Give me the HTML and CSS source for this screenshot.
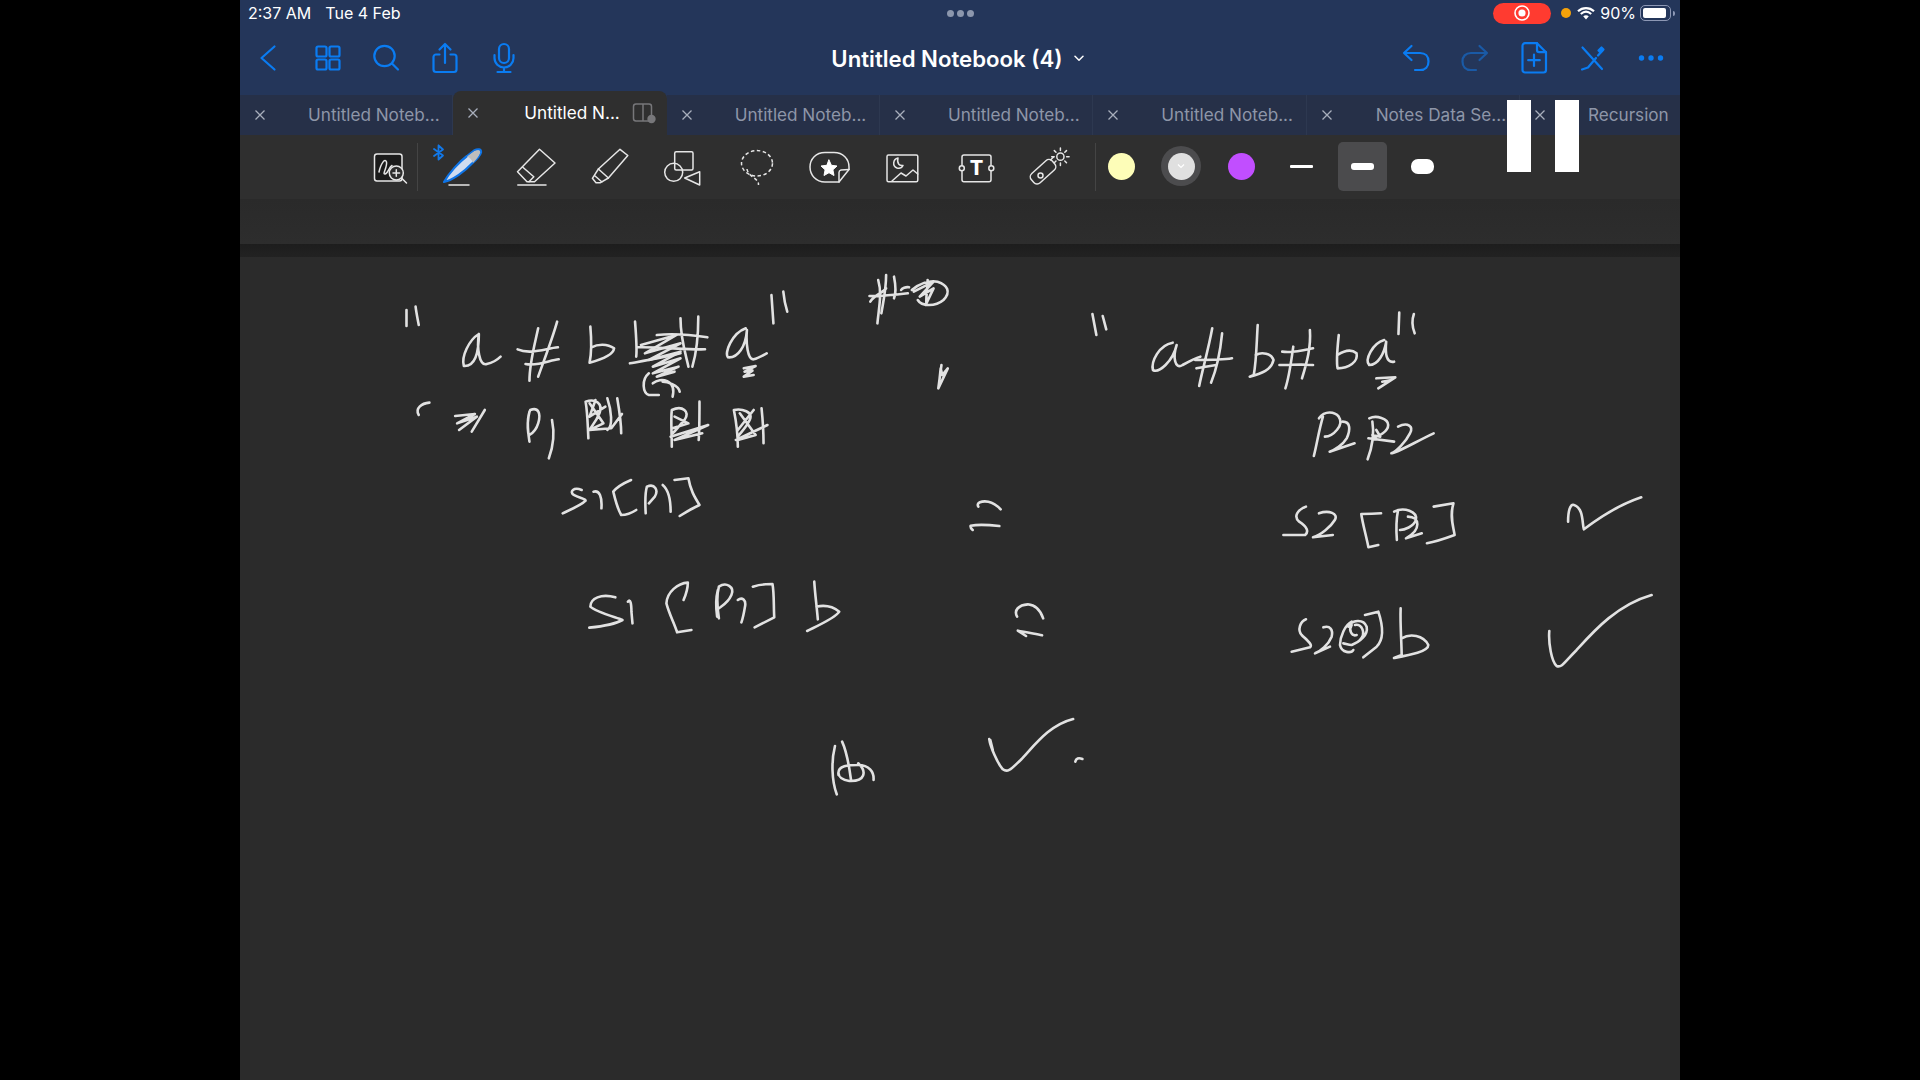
FILE: index.html
```html
<!DOCTYPE html>
<html lang="en">
<head>
<meta charset="utf-8">
<title>Untitled Notebook (4)</title>
<link rel="stylesheet" href="styles.css">
</head>
<body>
<div class="app">
  <header class="top">
    <div class="status">
      <div class="status-left"><span>2:37 AM</span><span>Tue 4 Feb</span></div>
      <div class="status-dots"><i></i><i></i><i></i></div>
      <div class="status-right">
        <div class="rec"><svg width="18" height="18" viewBox="0 0 18 18"><circle class="rec-ring" cx="9" cy="9" r="7"/><circle class="rec-core" cx="9" cy="9" r="3.6"/></svg></div>
        <i class="cam-dot"></i>
        <svg class="wifi" width="18" height="14" viewBox="0 0 18 14"><path class="wifi-arc" d="M1 5.2C5.6 1 12.4 1 17 5.2"/><path class="wifi-arc" d="M3.8 8C7 5.2 11 5.2 14.2 8"/><path class="wifi-fill" d="M6.2 10.2C7.9 8.8 10.1 8.8 11.8 10.2L9 13.4Z"/></svg>
        <span class="batt-text">90%</span>
        <div class="batt"><div class="batt-in"></div></div>
        <i class="batt-nub"></i>
      </div>
    </div>
    <nav class="nav">
      <div class="nav-side">
        <div class="slot"><svg class="ico" viewBox="0 0 32 32"><path d="M21.500 4.500L8.500 16l13 11.500"/></svg></div>
        <div class="slot"><svg class="ico" viewBox="0 0 32 32"><rect x="4.500" y="4.500" width="10" height="10" rx="1.500"/><rect x="17.500" y="4.500" width="10" height="10" rx="1.500"/><rect x="4.500" y="17.500" width="10" height="10" rx="1.500"/><rect x="17.500" y="17.500" width="10" height="10" rx="1.500"/></svg></div>
        <div class="slot"><svg class="ico" viewBox="0 0 32 32"><circle cx="14.500" cy="14" r="10.200"/><path d="M22 21.500L28 27.500"/></svg></div>
        <div class="slot"><svg class="ico" viewBox="0 0 32 32"><path d="M10.500 12.500H7a2.500 2.500 0 0 0-2.500 2.500v12.500A2.500 2.500 0 0 0 7 30h18a2.500 2.500 0 0 0 2.500-2.500V15a2.500 2.500 0 0 0-2.500-2.500h-3.500"/><path d="M16 21V2.500M10.500 7.500L16 2l5.500 5.500"/></svg></div>
        <div class="slot"><svg class="ico" viewBox="0 0 32 32"><rect x="11" y="2" width="10" height="19" rx="5"/><path d="M6.500 13v3a9.500 9.500 0 0 0 19 0v-3M16 25.500V30M9.500 30h13"/></svg></div>
      </div>
      <div class="title"><span>Untitled Notebook (4)</span><svg class="title-chev" width="10" height="7" viewBox="0 0 10 7"><path d="M1 1.200L5 5.200L9 1.200"/></svg></div>
      <div class="nav-side nav-right">
        <div class="slot"><svg class="ico" viewBox="0 0 32 32"><path d="M11.500 4L4 11l7.500 7M4 11h16c5.500 0 8.500 3.500 8.500 8.500S25.500 28 20 28h-5"/></svg></div>
        <div class="slot"><svg class="ico ico-dim" viewBox="0 0 32 32"><path d="M20.500 4L28 11l-7.500 7M28 11H12C6.500 11 3.500 14.500 3.500 19.500S6.500 28 12 28h5"/></svg></div>
        <div class="slot"><svg class="ico" viewBox="0 0 32 32"><path d="M7 1.200h12L28 10.200V28a2.500 2.500 0 0 1-2.500 2.500H7A2.500 2.500 0 0 1 4.500 28V3.700A2.500 2.500 0 0 1 7 1.200Z"/><path d="M19 1.200V8a2.200 2.200 0 0 0 2.200 2.200H28M16 12.500v11.500M10.200 18.200h11.600"/></svg></div>
        <div class="slot"><svg class="ico" viewBox="0 0 32 32"><path d="M6.500 5.500L26 27M6 27.500L12 25.500L20 16M22 13.500L26.500 8.500"/><path class="ico-fill" d="M22.500 8.500L25.500 5.500L27.500 7.500L24.500 10.500Z"/></svg></div>
        <div class="slot"><svg class="ico-dots" viewBox="0 0 32 32"><circle cx="6.500" cy="16" r="2.700"/><circle cx="16" cy="16" r="2.700"/><circle cx="25.500" cy="16" r="2.700"/></svg></div>
      </div>
    </nav>
    <div class="tabs">
      <div class="tab"><svg class="tab-x" viewBox="0 0 12 12"><path d="M1.500 1.500l9 9M10.500 1.500l-9 9"/></svg><span class="tab-name">Untitled Noteb...</span></div>
      <div class="tab tab-active"><svg class="tab-x" viewBox="0 0 12 12"><path d="M1.500 1.500l9 9M10.500 1.500l-9 9"/></svg><span class="tab-name">Untitled N...</span>
        <svg class="tab-split" width="24" height="24" viewBox="0 0 24 24"><rect x="1.500" y="3" width="18" height="17" rx="2.500"/><path d="M11 3v17"/><circle class="tab-split-dot" cx="19.500" cy="18" r="4.200"/></svg></div>
      <div class="tab"><svg class="tab-x" viewBox="0 0 12 12"><path d="M1.500 1.500l9 9M10.500 1.500l-9 9"/></svg><span class="tab-name">Untitled Noteb...</span></div>
      <div class="tab"><svg class="tab-x" viewBox="0 0 12 12"><path d="M1.500 1.500l9 9M10.500 1.500l-9 9"/></svg><span class="tab-name">Untitled Noteb...</span></div>
      <div class="tab"><svg class="tab-x" viewBox="0 0 12 12"><path d="M1.500 1.500l9 9M10.500 1.500l-9 9"/></svg><span class="tab-name">Untitled Noteb...</span></div>
      <div class="tab"><svg class="tab-x" viewBox="0 0 12 12"><path d="M1.500 1.500l9 9M10.500 1.500l-9 9"/></svg><span class="tab-name tab-name-notes">Notes Data Se...</span></div>
      <div class="tab"><svg class="tab-x" viewBox="0 0 12 12"><path d="M1.500 1.500l9 9M10.500 1.500l-9 9"/></svg><span class="tab-name">Recursion</span></div>
    </div>
  </header>

  <section class="toolbar">
    <div class="tool"><svg class="tic" viewBox="0 0 44 44"><rect class="tic-dark" x="6.500" y="9" width="27.500" height="27" rx="2.500"/><path d="M11 27C13 18 17 13 18.500 17C19.500 22 14 29.500 17 29C20 28.500 21 22 24 20.500"/><circle class="tic-bg" cx="28.300" cy="28" r="7"/><path d="M33.500 33L38.500 38M25 28h6.600M28.300 24.700v6.600"/></svg></div>
    <i class="tdiv tdiv-first"></i>
    <div class="tool"><svg class="tic tic-pen" viewBox="0 0 44 44"><path class="pen-body" d="M3 37C8 28 18 17 26 11L33 5.500C37 3.500 40.500 4 40 7.500C39 11 35 15 31 18.500C24 26 12 35 3 37Z"/><path class="pen-band" d="M26 11.500L33.500 6C37 4.500 40 5 39 8C38 11 35 15 32 18C31 15 29 12.500 26 11.500Z"/><path d="M8 40H28"/><path class="bt" d="M-2.500 0.500V14.500L2 10.500L-7 4M-7 11L2 4.500L-2.500 0.500"/></svg></div>
    <div class="tool"><svg class="tic" viewBox="0 0 44 44"><path d="M25.500 4.300L41 18L20.500 36.700H13L3.500 26.700Z"/><path d="M8.800 22.300L19.800 31.700L15 36.700M3.800 40H32"/></svg></div>
    <div class="tool"><svg class="tic" viewBox="0 0 44 44"><path d="M32 4.300L39.800 10.500L20.400 33L10.400 24Z"/><path d="M10.400 24L4.400 33.300L8 37.700H12.500L20.400 33M6.500 30.500L14 37"/></svg></div>
    <div class="tool"><svg class="tic" viewBox="0 0 44 44"><rect x="13.700" y="6.700" width="18.300" height="18.300" rx="1.500"/><circle cx="12.700" cy="27.300" r="9"/><path d="M38.700 26.700L23.700 33L38.700 40Z"/></svg></div>
    <div class="tool"><svg class="tic tic-dash" viewBox="0 0 44 44"><ellipse cx="22" cy="18.300" rx="15.500" ry="12.700"/><path d="M12 24C13 32 24 33 23.500 40"/></svg></div>
    <div class="tool"><svg class="tic" viewBox="0 0 44 44"><path d="M17 7.500H26C35 7.500 41 14 41 22V24.500L31 37H17C8 37 2 30 2 22C2 14 8 7.500 17 7.500Z"/><path d="M41 24.500L33 25Q31 25.500 31 27.500V37"/><path class="tic-solid" d="M21 15L23.400 20.300L29 21L24.900 24.800L26 30.500L21 27.700L16 30.500L17.100 24.800L13 21L18.600 20.300Z"/></svg></div>
    <div class="tool"><svg class="tic" viewBox="0 0 44 44"><rect x="6" y="10" width="30.800" height="26.700" rx="1.500"/><path d="M17 13C12 14 11 21 16 23C19 24 21 22.500 22 20.500C19 21 15.500 19 17 13ZM11 36L20 28L25 31L32 25L36.800 29"/></svg></div>
    <div class="tool"><svg class="tic" viewBox="0 0 44 44"><rect x="7" y="10" width="29" height="26.700" rx="2"/><circle class="tic-bg" cx="6.800" cy="23.300" r="2.500"/><circle class="tic-bg" cx="36.300" cy="23.300" r="2.500"/><text class="tic-t" x="21.500" y="30">T</text></svg></div>
    <div class="tool"><svg class="tic" viewBox="0 0 44 44"><rect x="1" y="20.500" width="28" height="12.500" rx="4.500" transform="rotate(-42 15 26.700)"/><circle cx="12.500" cy="30.500" r="2.500"/><path d="M22.500 15L25.500 12"/><circle cx="32.400" cy="11.700" r="3.600"/><path d="M32.400 3V5.500M32.400 18V20.500M23.700 11.700H26.200M38.600 11.700H41.100M26.300 5.600L28 7.300M36.800 16L38.500 17.700M26.300 17.700L28 16M36.800 7.300L38.500 5.600"/></svg></div>
    <i class="tdiv tdiv-second"></i>
    <div class="prop"><i class="swatch swatch-yellow"></i></div>
    <div class="prop"><div class="swatch-ring"><i class="swatch swatch-grey"><svg width="8" height="6" viewBox="0 0 8 6"><path d="M1 1.500L4 4.500L7 1.500"/></svg></i></div></div>
    <div class="prop"><i class="swatch swatch-purple"></i></div>
    <div class="prop"><i class="line line-s"></i></div>
    <div class="prop"><div class="line-box"><i class="line line-m"></i></div></div>
    <div class="prop"><i class="line line-l"></i></div>
  </section>

  <div class="band"></div>
  <div class="page-edge"></div>

  <main class="canvas">
    <svg class="ink" viewBox="240 257 1440 823">
      <g transform="translate(380 260) scale(.3954 .3333)">
        <path d="M67 150L67 198M90 140C92 160 95 175 98 195"/>
        <path d="M250 222C225 240 205 290 212 318C240 320 250 280 250 222C245 260 250 320 270 312C285 308 298 298 305 290"/>
        <path d="M348 268C380 285 420 265 450 262M368 312C400 320 430 300 452 298M400 205C390 260 378 310 378 362M448 185C435 240 415 300 400 350"/>
        <path d="M532 200C535 240 535 280 530 308C555 300 590 285 592 265C575 250 550 252 535 262"/>
        <path d="M645 185C648 230 650 270 648 290M632 310C680 300 730 290 760 280M760 175C760 240 775 290 780 320M805 170C805 220 800 280 790 320M700 225C740 220 790 225 828 232M650 262C700 260 780 270 822 268"/>
        <path d="M660 255L750 225L670 280L760 250L680 300L760 275L690 320L760 295L690 340L755 320L700 350L745 335"/>
        <path d="M680 340C660 360 665 400 680 405L705 405M690 370C710 350 750 360 740 410M715 365C725 365 755 375 758 395"/>
        <path d="M925 205C890 220 870 280 880 292C905 295 925 260 928 210C925 250 930 300 945 298C955 295 970 285 978 280"/>
        <path d="M920 325L950 318L922 335L942 332L920 350L945 345"/>
        <path d="M990 105L995 190M1020 95C1022 120 1026 140 1030 155"/>
        <path d="M1260 60C1270 100 1262 140 1258 190M1280 45C1280 90 1272 130 1268 160M1238 108C1260 110 1300 105 1335 100M1240 125C1250 105 1270 100 1280 85M1300 50C1305 80 1305 100 1300 115M1318 90C1320 85 1330 80 1338 82"/>
        <path d="M1345 90C1365 70 1390 60 1410 65C1435 75 1445 95 1425 120C1405 140 1370 140 1360 120M1350 95L1400 65L1365 110L1400 85L1380 135M1385 60C1385 90 1380 110 1382 135"/>
        <path d="M1420 315L1412 385L1436 325L1422 345L1418 325L1414 370"/>
        <path d="M125 428C105 430 88 445 98 465"/>
        <path d="M190 468L240 462L195 490L245 470L200 510M265 450L232 515"/>
        <path d="M378 545C372 500 372 470 380 450C400 440 408 460 400 490C395 510 385 520 378 525M375 520C372 495 374 475 378 455M435 480C442 520 438 560 427 595"/>
        <path d="M527 535C525 490 525 460 520 425C545 415 565 430 555 460C545 490 530 505 530 510M575 510C590 500 585 450 575 415M610 520C610 490 605 450 600 415M530 430L565 490L530 510L585 505L612 462M545 420L530 470L570 440"/>
        <path d="M738 560C738 520 735 480 738 450C765 435 785 455 770 480C755 500 745 515 740 520M808 425C808 470 808 510 806 540M735 530L830 495L745 540L815 520M745 470L780 490L740 505"/>
        <path d="M905 560C905 510 900 480 895 450C915 445 945 455 935 480C925 505 910 520 905 530M970 550C970 510 968 480 965 445M900 540L980 495M910 460L950 525L905 540M945 450L905 510"/>
        <path d="M510 690C490 680 478 695 490 705C505 715 520 715 520 722C510 735 480 750 462 760M540 695C555 690 562 710 560 745"/>
        <path d="M635 660C615 670 600 680 590 695C595 720 600 745 610 765C625 765 635 760 648 750M672 760C670 720 670 700 675 680C695 670 705 690 695 710L680 730M715 675C730 690 735 720 735 755M745 660L780 655C785 690 795 710 808 735C790 745 775 755 758 768"/>
      </g>
      <g transform="translate(950 480) scale(.3333)">
        <path d="M85 80C78 68 95 62 115 65C130 68 140 75 152 88M148 138C120 135 85 133 62 137C60 143 66 148 68 150"/>
      </g>
      <g transform="translate(1060 290) scale(.3954 .3333)">
        <path d="M82 72L92 135M108 78L117 118"/>
        <path d="M285 158C250 165 230 215 235 240C250 250 285 215 295 165C285 200 290 240 310 225C325 215 340 205 355 200"/>
        <path d="M385 115C375 180 360 240 352 288M410 130C405 190 395 240 382 278M342 210C370 210 410 210 435 205M345 235L395 225"/>
        <path d="M500 105C497 160 497 210 490 255L480 260C510 250 535 240 540 210C535 190 510 185 495 195"/>
        <path d="M590 170C585 210 580 260 570 295M632 120C635 170 625 215 612 265M562 185C590 190 620 180 640 175M555 225C585 225 610 222 640 225"/>
        <path d="M705 135C702 170 698 210 702 235C730 235 755 215 750 190C735 175 715 185 702 195"/>
        <path d="M820 150C790 160 770 210 782 225C805 225 820 190 825 155C822 190 825 220 845 215"/>
        <path d="M800 265L848 262L805 295L838 270L815 275"/>
        <path d="M858 68L856 132M895 72C888 95 892 115 897 130"/>
        <path d="M665 380C655 420 650 460 642 498M655 385C670 360 695 365 705 380C720 405 690 440 670 440M715 395C735 395 735 420 725 445C715 465 695 480 682 485L745 460"/>
        <path d="M790 395C795 430 790 470 778 508M782 385C800 375 830 385 830 405C830 425 805 440 790 445M855 410C880 395 895 410 885 430C875 455 850 485 838 490C850 490 900 455 945 430M780 445L845 455M800 420L810 440L790 435"/>
        <path d="M622 650C600 660 590 680 605 695C625 710 630 725 620 735L565 735M655 670C680 660 705 670 695 690C685 710 660 735 640 742L690 735"/>
        <path d="M812 670C790 672 775 672 762 672C765 700 775 740 780 772L805 765"/>
        <path d="M855 660C850 690 850 720 852 750M845 665C870 650 905 665 900 690C895 710 870 720 860 720M880 680C910 680 915 720 875 745L915 730"/>
        <path d="M945 650L995 640C985 680 995 710 998 735C975 745 950 755 928 760"/>
        <path d="M1285 695C1285 665 1290 640 1300 645C1325 655 1320 700 1325 718C1345 700 1400 650 1470 622"/>
      </g>
      <g transform="translate(560 560) scale(.3571 .3333)">
        <path d="M155 112C115 100 85 115 85 140C100 155 150 170 175 180C150 195 110 200 82 203M190 125C197 115 200 130 200 155L203 190"/>
        <path d="M358 68C330 70 300 95 298 130C305 160 320 190 328 217L368 210M358 68C358 85 352 105 346 120"/>
        <path d="M445 175C440 140 437 110 445 80C465 65 490 80 480 105C470 130 450 140 445 145M440 170C436 140 436 115 442 90"/>
        <path d="M498 120C510 110 522 120 518 140C515 160 512 175 508 187M540 80C560 72 585 72 595 72C600 100 598 140 600 172L545 202"/>
        <path d="M712 65C714 100 718 130 722 178M692 213C720 198 770 175 782 155C765 140 740 135 718 140"/>
        <path d="M1280 170C1270 150 1285 135 1310 133C1330 135 1345 150 1353 175M1350 226C1330 222 1300 215 1282 212L1305 228"/>
        <path d="M770 558C760 600 760 660 775 703M790 545C805 580 810 620 815 660M780 645C775 615 810 615 835 615C865 615 880 635 878 660M835 610C860 635 855 665 810 663C790 660 780 650 780 640"/>
        <path d="M1202 537C1205 560 1225 610 1240 628C1255 640 1265 625 1290 600C1330 555 1370 495 1437 477M1212 570L1205 540"/>
        <path d="M1443 605C1445 595 1452 592 1463 597"/>
      </g>
      <g transform="translate(1220 570) scale(.3333)">
        <path d="M258 148C240 155 232 180 245 195C260 210 280 225 270 232L215 245M310 172C330 165 340 180 335 200C325 225 300 245 285 250L330 230"/>
        <path d="M395 155C375 165 360 200 360 225C365 250 395 250 400 240M385 170C395 150 430 145 440 170C445 195 420 215 395 225C385 225 375 220 370 220M405 165C425 160 440 190 420 210M395 165C385 180 395 200 410 195M435 135L475 125C490 170 490 210 470 230L430 262"/>
        <path d="M542 115C540 160 545 220 545 255L522 264C570 255 625 245 625 225C610 195 570 190 545 205"/>
        <path d="M988 183C985 220 995 275 1010 288C1025 295 1035 275 1070 240C1120 185 1190 105 1295 75"/>
      </g>
    </svg>
  </main>

  <div class="pause"><i></i><i></i></div>
</div>
</body>
</html>
```
FILE: styles.css
```css
* { box-sizing: border-box; }
html, body { margin: 0; height: 100%; background: #000; overflow: hidden; }
body { font-family: Inter, "Liberation Sans", sans-serif; color: #fff; }
i { display: block; }
svg { display: block; }

.app { position: relative; width: 1440px; height: 1080px; margin: 0 auto; display: flex; flex-direction: column; background: #2b2b2b; }

.top { background: #24365a; flex: none; }

.status { height: 26px; display: grid; grid-template-columns: 1fr auto 1fr; align-items: center; padding: 0 8px; font-size: 16px; }
.status-left { display: flex; gap: 14px; }
.status-dots { display: flex; gap: 3px; }
.status-dots i { width: 7px; height: 7px; border-radius: 50%; background: #8c97ad; }
.status-right { display: flex; align-items: center; justify-content: flex-end; margin-right: -1px; }
.rec { width: 58px; height: 21px; border-radius: 11px; background: #ff3b30; display: flex; align-items: center; justify-content: center; }
.rec-ring { fill: none; stroke: #fff; stroke-width: 1.6; }
.rec-core { fill: #fff; }
.cam-dot { width: 10px; height: 10px; border-radius: 50%; background: #f5a20a; margin-left: 10px; }
.wifi { margin-left: 6px; }
.wifi-arc { fill: none; stroke: #fff; stroke-width: 2.200; }
.wifi-fill { fill: #fff; }
.batt-text { margin-left: 5px; }
.batt { width: 31px; height: 16px; margin-left: 4px; border: 1px solid #8d98b5; border-radius: 5px; padding: 2px; }
.batt-in { width: 90%; height: 100%; background: #fff; border-radius: 2px; }
.batt-nub { width: 2px; height: 5px; margin: 0 -2px 0 2px; background: #8d98b5; border-radius: 0 2px 2px 0; }

.nav { height: 64px; margin-bottom: 1px; display: grid; grid-template-columns: 1fr auto 1fr; align-items: center; }
.nav-side { display: flex; }
.nav-right { justify-content: flex-end; }
.slot { width: 58.600px; height: 40px; display: flex; align-items: center; justify-content: center; }
.ico { width: 32px; height: 32px; fill: none; stroke: #0a7cf2; stroke-width: 2.200; stroke-linecap: round; stroke-linejoin: round; }
.ico-dim { stroke: #1a5aa6; }
.ico-fill { fill: #0a7cf2; }
.ico-dots { width: 32px; height: 32px; fill: #0a7cf2; }
.title { display: flex; align-items: center; gap: 11px; font-size: 22.200px; font-weight: 600; padding-right: 5px; }
.title-chev { fill: none; stroke: #fff; stroke-width: 1.500; stroke-linecap: round; stroke-linejoin: round; }

.tabs { height: 44px; display: flex; overflow: hidden; }
.tab { flex: none; width: 213.330px; margin-top: 4px; padding-bottom: 1px; background: #263048; border-right: 1px solid #2d3850; display: flex; align-items: center; color: #8e96a8; font-size: 17.150px; }
.tab-x { width: 12px; height: 12px; margin-left: 14px; fill: none; stroke: #a9afbc; stroke-width: 1.300; flex: none; }
.tab-name { margin-left: 42px; white-space: nowrap; }
.tab-name-notes { margin-left: 43px; }
.tab-active { position: relative; margin-top: 0; padding-bottom: 1px; background: #2f2f2f; border-right: 0; border-radius: 8px 8px 0 0; color: #fff; }
.tab-active .tab-name { margin-left: 45px; }
.tab-split { margin-left: auto; margin-right: 11px; fill: none; stroke: #77777a; stroke-width: 1.500; }
.tab-split-dot { fill: #77777a; stroke: none; }

.toolbar { flex: none; height: 64px; background: #2f2f2f; display: flex; align-items: center; padding-left: 113px; }
.tool { flex: none; width: 73.400px; display: flex; justify-content: center; }
.tic { width: 44px; height: 44px; overflow: visible; fill: none; stroke: #e6e6e6; stroke-width: 1.500; stroke-linecap: round; stroke-linejoin: round; }
.tic-pen { margin-left: -1px; }
.tic-dark { fill: #1b1b1b; }
.tic-bg { fill: #2f2f2f; }
.tic-solid { fill: #fff; stroke: #fff; stroke-width: 1; }
.tic-t { font-family: Inter, sans-serif; font-size: 20px; font-weight: 800; fill: #fff; stroke: none; text-anchor: middle; }
.tic-dash { stroke-dasharray: 3.500 2.500; stroke-linecap: butt; }
.pen-body { fill: #cfdcf0; stroke: #0f74e6; stroke-width: 2.200; }
.pen-band { fill: #bdbdbd; stroke: none; }
.bt { stroke: #1278e8; stroke-width: 1.800; }
.tdiv { flex: none; width: 1px; height: 48px; background: #444; }
.tdiv-first { margin: 0 8.400px 0 -9.400px; }
.tdiv-second { margin: 0 -5px 0 8px; }
.prop { flex: none; width: 60.300px; display: flex; justify-content: center; align-items: center; margin-bottom: 2px; }
.swatch { width: 27px; height: 27px; border-radius: 50%; display: flex; align-items: center; justify-content: center; }
.swatch svg { fill: none; stroke: #fff; stroke-width: 1.200; }
.swatch-yellow { background: #fdfdb8; }
.swatch-grey { background: #e0e0e0; }
.swatch-purple { background: #c14eff; }
.swatch-ring { width: 40px; height: 40px; border-radius: 50%; background: #4c4c4e; display: flex; align-items: center; justify-content: center; }
.line { width: 23px; background: #fff; }
.line-s { height: 3px; border-radius: 1px; }
.line-m { height: 7px; border-radius: 3px; }
.line-l { height: 15px; border-radius: 7px; }
.line-box { width: 49px; height: 49px; border-radius: 5px; background: #4b4b4d; display: flex; align-items: center; justify-content: center; }

.band { flex: none; height: 45px; background: linear-gradient(#2a2a2a, #2d2d2d); }
.page-edge { flex: none; height: 13px; background: linear-gradient(#1d1d1d, #222); }

.canvas { flex: 1; background: #2b2b2b; min-height: 0; }
.ink { width: 1440px; height: 823px; fill: none; stroke: #e2e2e2; stroke-linecap: round; stroke-linejoin: round; filter: blur(.35px); }
.ink path { stroke-width: 2.600; vector-effect: non-scaling-stroke; }

.pause { position: absolute; left: 1267px; top: 100px; display: flex; gap: 24px; }
.pause i { width: 24px; height: 72px; background: #fff; }
```
